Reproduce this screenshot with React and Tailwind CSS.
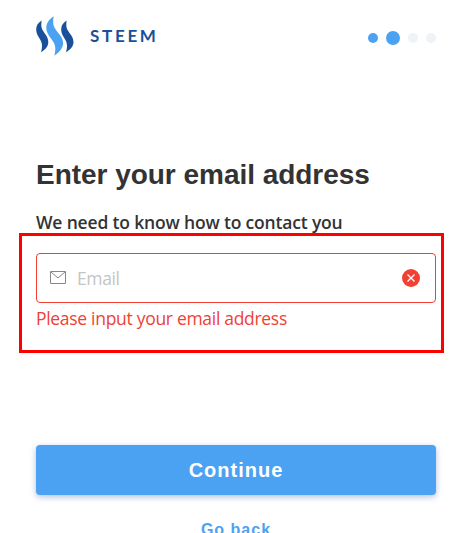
function Logo() {
  return (
    <div className="flex h-10 items-center">
      <svg className="h-10 w-[38px] shrink-0" viewBox="0 0 38 40" aria-hidden="true">
        <path fill="#1A5099" d="M5.600 4.500C1.800 7 .2 9.700 .2 13.500C.2 20.500 6 23 6 29.500C6 32.500 5.600 34 5 36.200C9.500 33.500 12.300 30.300 12.300 26C12.300 18.500 5.300 16 5.300 9.500C5.300 7.500 5.400 6 5.600 4.500Z" />
        <path fill="#4BA2F2" d="M17.600.3C12.600 3.700 10.300 7.500 10.300 12C10.300 20.500 19.300 24 19.300 32C19.300 35 19 37.200 18.300 39.800C24 36 27.100 31.500 27.100 27C27.100 18.500 17.200 14.500 17.200 7C17.200 4.500 17.200 2.600 17.600.3Z" />
        <path fill="#1A5099" d="M30.600 4.500C26.800 7 25.200 9.700 25.200 13.500C25.200 20.500 31 23 31 29.500C31 32.500 30.600 34 30 36.200C34.500 33.500 37.500 30.300 37.500 26C37.500 18.500 30.300 16 30.300 9.500C30.300 7.500 30.400 6 30.600 4.500Z" />
      </svg>
      <span className="mt-px ml-4 font-[Lato,sans-serif] text-[17px] leading-5 font-bold tracking-[2.700px] text-[#1A5099]">STEEM</span>
    </div>
  );
}

function Steps() {
  return (
    <div className="mt-[5px] flex items-center gap-2">
      <span className="size-[10px] rounded-full bg-[#4BA2F2]" />
      <span className="size-[14px] rounded-full bg-[#4BA2F2]" />
      <span className="size-[10px] rounded-full bg-[#EEF3F8]" />
      <span className="size-[10px] rounded-full bg-[#EEF3F8]" />
    </div>
  );
}

export default function App() {
  return (
    <main className="relative h-[533px] w-[472px] overflow-hidden bg-white pt-[15.500px] pl-9 font-['Open_Sans','Noto_Sans',sans-serif] text-[#333]">
      <div className="flex w-[400px] flex-col">
        <header className="flex h-10 items-center justify-between">
          <Logo />
          <Steps />
        </header>
        <h1 className="mt-[99.500px] h-10 font-['Liberation_Sans',Arial,sans-serif] text-[28px] leading-10 font-bold tracking-[-0.030px] whitespace-nowrap">Enter your email address</h1>
        <p className="mt-[15px] h-6 text-[17.500px] leading-6 font-semibold tracking-[-0.170px] whitespace-nowrap">We need to know how to contact you</p>
        <div className="mt-[19px] flex h-[50px] items-center rounded-[4px] border border-[#F04134] px-[13px]">
          <svg className="h-[14px] w-4 shrink-0" viewBox="0 0 16 14" fill="none" stroke="#888" strokeWidth="1" aria-hidden="true">
            <path d="M.5.500H15.500V12.500H.5ZM1 1L8 7L15 1" />
          </svg>
          <input placeholder="Email" className="ml-[11px] min-w-0 flex-1 text-[17.500px] leading-6 tracking-[-0.400px] outline-none placeholder:text-[#c4c4c4]" />
          <svg className="mr-[2px] size-[18px] shrink-0" viewBox="0 0 18 18" aria-hidden="true">
            <circle cx="9" cy="9" r="9" fill="#F04134" />
            <path d="M5.500 5.500L12.500 12.500M12.500 5.500L5.500 12.500" stroke="white" strokeWidth="1.300" />
          </svg>
        </div>
        <p className="mt-[3px] h-6 text-[17.500px] leading-6 tracking-[-0.300px] whitespace-nowrap text-[#F04134]">Please input your email address</p>
        <button className="mt-[115px] h-[50px] rounded-[4px] bg-[#4BA2F2] pb-px font-['Liberation_Sans',Arial,sans-serif] text-[20px] font-bold tracking-[1px] text-white shadow-[0_2px_6px_rgba(26,80,153,0.35)]">Continue</button>
        <a className="mt-[25px] self-center font-['Liberation_Sans',Arial,sans-serif] text-[16px] leading-5 font-bold tracking-[1px] text-[#4BA2F2]">Go back</a>
      </div>
      <div className="pointer-events-none absolute top-[233px] left-[19px] h-[120px] w-[425px] border-3 border-[#f00]" />
    </main>
  );
}
